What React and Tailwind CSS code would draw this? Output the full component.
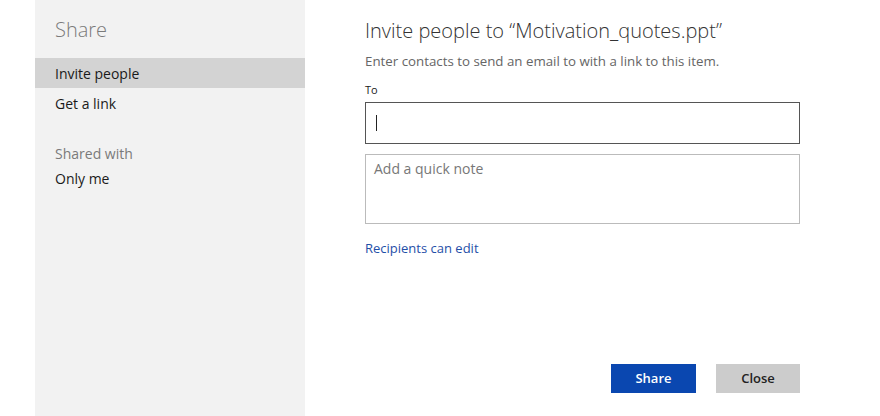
import React from 'react';

const SideItem = ({ label, active }) => (
    <div
        className={`h-[30px] flex items-center pl-[20px] text-[14px] text-[#1a1a1a] ${active ? 'bg-[#d3d3d3]' : ''}`}
    >
        {label}
    </div>
);

const App = () => {
    return (
        <div className="w-[880px] h-[416px] flex bg-white overflow-hidden font-['Open_Sans',sans-serif]">
            <div className="w-[35px] shrink-0" />

            <aside className="w-[270px] shrink-0 h-full bg-[#f2f2f2] pt-[16px]">
                <h2 className="pl-[20px] text-[20px] font-light text-[#7a7a7a] leading-[28px] mb-[14px]">
                    Share
                </h2>
                <SideItem label="Invite people" active />
                <SideItem label="Get a link" />
                <div className="mt-[20px] h-[30px] flex items-center pl-[20px] text-[14px] text-[#7a7a7a]">
                    Shared with
                </div>
                <div className="h-[20px] flex items-center pl-[20px] text-[14px] text-[#1a1a1a]">
                    Only me
                </div>
            </aside>

            <main className="w-[435px] ml-[60px] h-full flex flex-col pt-[17px]">
                <h1 className="text-[20px] font-light text-[#333] leading-[28px]">
                    Invite people to “Motivation_quotes.ppt”
                </h1>
                <p className="mt-[7px] text-[13.3px] text-[#666] leading-[18px]">
                    Enter contacts to send an email to with a link to this item.
                </p>
                <label className="mt-[13px] text-[11px] text-[#1a1a1a] leading-[14px]">To</label>
                <div className="mt-[5px] h-[42px] border border-[#555] flex items-center pl-[10px]">
                    <span className="w-[1px] h-[16px] bg-[#222]" />
                </div>
                <div className="mt-[10px] h-[70px] border border-[#bbb] px-[8px] pt-[3px] text-[14px] text-[#777]">
                    Add a quick note
                </div>
                <a href="#" className="mt-[15px] text-[13px] text-[#1f4fa8] leading-[18px] self-start">
                    Recipients can edit
                </a>
                <div className="mt-auto mb-[23px] flex justify-end gap-[20px]">
                    <button className="w-[85px] h-[29px] bg-[#0a47b0] text-white text-[13px] font-semibold">
                        Share
                    </button>
                    <button className="w-[84px] h-[29px] bg-[#cccccc] text-[#222] text-[13px] font-semibold">
                        Close
                    </button>
                </div>
            </main>
        </div>
    );
};

export default App;
